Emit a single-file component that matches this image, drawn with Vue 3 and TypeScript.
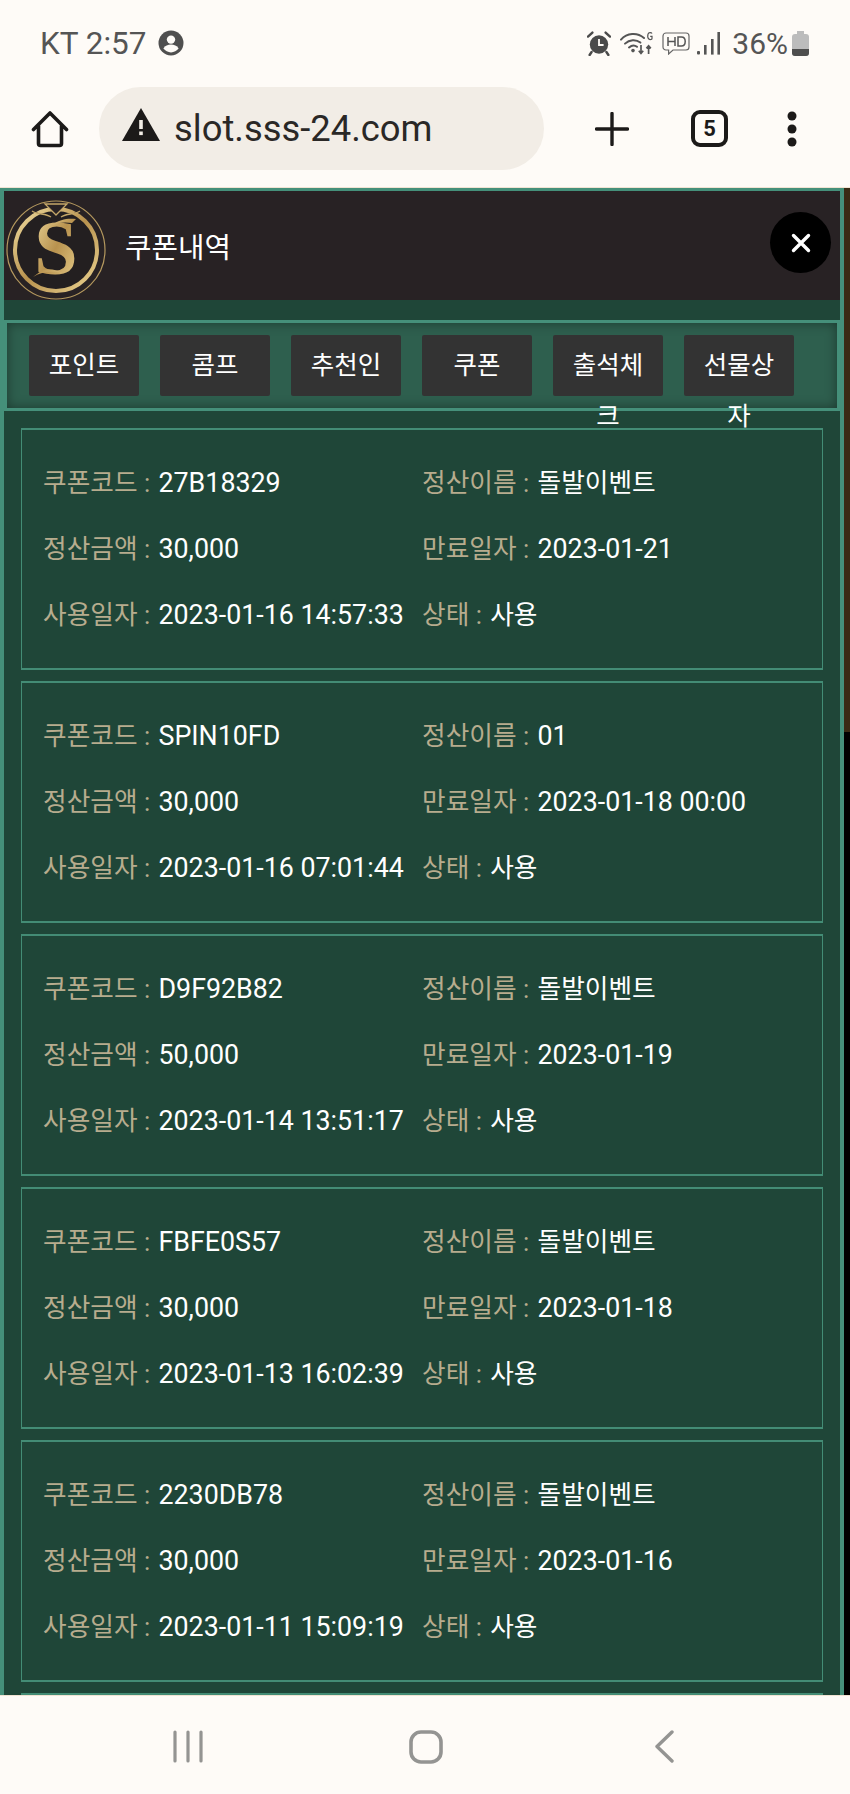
<template>
  <div class="screen">
    <div class="status-bar">
      <div class="status-left">
        <span class="status-text carrier">KT 2:57</span>
        <svg class="ic-user" viewBox="0 0 26 26" aria-hidden="true">
          <circle cx="13" cy="13" r="12.5" fill="#4f4f4f" />
          <circle cx="13" cy="9.6" r="4.2" fill="#fefbf7" />
          <path d="M5.4 18.6c1.6-3 4.6-4 7.6-4s6 1 7.6 4c-1.8 2.4-4.6 3.8-7.6 3.8s-5.8-1.4-7.6-3.8z" fill="#fefbf7" />
        </svg>
      </div>
      <div class="status-right">
        <svg class="ic-alarm" viewBox="0 0 24 25" aria-hidden="true">
          <circle cx="12" cy="13.5" r="9.2" fill="#4a4a4a" />
          <path d="M12 8v6h4.6" fill="none" stroke="#fefbf7" stroke-width="1.8" />
          <path d="M1 5.6 5.4 1.6M23 5.6 18.6 1.6M4.6 21l-2 3M19.4 21l2 3" stroke="#4a4a4a" stroke-width="2.4" stroke-linecap="round" />
        </svg>
        <svg class="ic-wifi" viewBox="0 0 33 24" aria-hidden="true">
          <g fill="none" stroke="#555" stroke-width="2" stroke-linecap="round">
            <path d="M1 8.6C7 2 17 1 24 7" />
            <path d="M5 12.6c4.400-4.200 11-4.600 15.400-1" />
            <path d="M9 16.400c2.600-2.200 5.800-2.400 8-.6" />
          </g>
          <circle cx="13" cy="19.600" r="1.800" fill="#555" />
          <path d="M21 14v8M18.800 19.800l2.200 2.600 2.200-2.600M28.600 23v-8M26.400 17.400l2.200-2.600 2.200 2.600" fill="none" stroke="#555" stroke-width="1.700" />
          <path d="M32 2.600c-.6-1.200-3.400-1.400-4 .6-.4 1.600-.2 4 .8 4.800 1.200 1 3.200.6 3.200-.6V5.400h-1.800" fill="none" stroke="#555" stroke-width="1.200" />
        </svg>
        <svg class="ic-hd" viewBox="0 0 28 23" aria-hidden="true">
          <path d="M4 1h20a3 3 0 0 1 3 3v11a3 3 0 0 1-3 3H11l-4.400 4v-4H4a3 3 0 0 1-3-3V4a3 3 0 0 1 3-3z" fill="none" stroke="#666" stroke-width="1.200" />
          <path d="M6 5v9M13 5v9M6 9.500h7M16 5v9h3.400c2.800 0 3.800-2 3.800-4.500S22.200 5 19.400 5H16z" fill="none" stroke="#555" stroke-width="1.500" />
        </svg>
        <svg class="ic-signal" viewBox="0 0 23 23" aria-hidden="true">
          <g fill="#555">
            <rect x="0" y="19" width="3" height="3.600" rx="1" />
            <rect x="7" y="13" width="2.600" height="9.600" />
            <rect x="14" y="7" width="2.600" height="15.600" />
            <rect x="20.400" y="0" width="2.600" height="22.600" />
          </g>
        </svg>
        <span class="status-text battery-text">36%</span>
        <div class="battery"><div class="battery-level"></div></div>
      </div>
    </div>

    <div class="toolbar">
      <svg class="ic-home" viewBox="0 0 38 38" aria-hidden="true">
        <path d="M2.500 19.500 19 3l16.500 16.500M7.500 16v17.500a2 2 0 0 0 2 2h19a2 2 0 0 0 2-2V16" fill="none" stroke="#1c1a19" stroke-width="3.600" stroke-linecap="round" stroke-linejoin="round" />
      </svg>
      <div class="address">
        <svg class="ic-warn" viewBox="0 0 38 33" aria-hidden="true">
          <path d="M19 0 38 33H0z" fill="#1c1a19" />
          <rect x="17.200" y="12" width="3.600" height="9" fill="#f2ede6" />
          <rect x="17.200" y="23.500" width="3.600" height="3.600" fill="#f2ede6" />
        </svg>
        <span class="url">slot.sss-24.com</span>
      </div>
      <svg class="ic-plus" viewBox="0 0 34 34" aria-hidden="true">
        <path d="M17 1.500v31M1.500 17h31" stroke="#1c1a19" stroke-width="3.400" stroke-linecap="round" />
      </svg>
      <div class="tab-count">5</div>
      <svg class="ic-dots" viewBox="0 0 10 36" aria-hidden="true">
        <circle cx="5" cy="5" r="4.500" fill="#1c1a19" />
        <circle cx="5" cy="18" r="4.500" fill="#1c1a19" />
        <circle cx="5" cy="31" r="4.500" fill="#1c1a19" />
      </svg>
    </div>

    <div class="viewport">
      <div class="panel">
        <div class="panel-head">
          <svg class="logo" viewBox="0 0 100 100" aria-hidden="true">
            <defs>
              <linearGradient id="gold" x1="0" y1="0" x2="1" y2="1">
                <stop offset="0" stop-color="#f0dca0" />
                <stop offset="0.5" stop-color="#b8924e" />
                <stop offset="1" stop-color="#ecd492" />
              </linearGradient>
            </defs>
            <circle cx="50" cy="50" r="49" fill="none" stroke="#b4985e" stroke-width="1.200" />
            <circle cx="50" cy="50" r="41" fill="#231f20" stroke="url(#gold)" stroke-width="4" />
            <path d="M50 15 39 4h22zM26 11c6 4 13 2 19 6M74 11c-6 4-13 2-19 6" fill="#282224" stroke="#c4a768" stroke-width="1.300" />
            <text class="logo-s" x="50" y="74" text-anchor="middle" fill="url(#gold)">S</text>
            <path d="M27 77c10-6 18-6 30-4-8-4-16-5-22-2zM70 19c-8-1-16 0-24 6 8-3 14-3 20-2z" fill="url(#gold)" />
          </svg>
          <span class="panel-title">쿠폰내역</span>
          <button type="button" class="close-btn" aria-label="닫기">
            <svg viewBox="0 0 20 20" aria-hidden="true">
              <path d="M2.500 2.500l15 15M17.500 2.500l-15 15" stroke="#fff" stroke-width="3.400" stroke-linecap="round" />
            </svg>
          </button>
        </div>

        <div class="tabs">
          <a v-for="tab in tabs" :key="tab" class="tab">{{ tab }}</a>
        </div>

        <div class="cards">
          <div v-for="c in coupons" :key="c.code" class="card">
            <div class="field"><span class="label">쿠폰코드 : </span><span class="value">{{ c.code }}</span></div>
            <div class="field"><span class="label">정산이름 : </span><span class="value" :class="{ ko: c.name !== '01' }">{{ c.name }}</span></div>
            <div class="field"><span class="label">정산금액 : </span><span class="value">{{ c.amount }}</span></div>
            <div class="field"><span class="label">만료일자 : </span><span class="value">{{ c.expires }}</span></div>
            <div class="field"><span class="label">사용일자 : </span><span class="value">{{ c.used }}</span></div>
            <div class="field"><span class="label">상태 : </span><span class="value ko">사용</span></div>
          </div>
          <div class="card"></div>
        </div>
      </div>
      <div class="side">
        <div class="side-top"></div>
        <div class="side-bottom"></div>
      </div>
    </div>

    <div class="nav-bar">
      <svg class="ic-recent" viewBox="0 0 30 33" aria-hidden="true">
        <path d="M2 2v29M15 2v29M28 2v29" stroke="#949492" stroke-width="3.200" stroke-linecap="round" />
      </svg>
      <svg class="ic-square" viewBox="0 0 34 34" aria-hidden="true">
        <rect x="2" y="2" width="30" height="30" rx="10" fill="none" stroke="#949492" stroke-width="3.600" />
      </svg>
      <svg class="ic-back" viewBox="0 0 19 33" aria-hidden="true">
        <path d="M17 2 2 16.500 17 31" fill="none" stroke="#949492" stroke-width="3.400" stroke-linecap="round" stroke-linejoin="round" />
      </svg>
    </div>
  </div>
</template>

<script setup lang="ts">
type Coupon = {
  code: string;
  name: string;
  amount: string;
  expires: string;
  used: string;
};

const tabs = ['포인트', '콤프', '추천인', '쿠폰', '출석체크', '선물상자'];

const coupons: Coupon[] = [
  { code: '27B18329', name: '돌발이벤트', amount: '30,000', expires: '2023-01-21', used: '2023-01-16 14:57:33' },
  { code: 'SPIN10FD', name: '01', amount: '30,000', expires: '2023-01-18 00:00', used: '2023-01-16 07:01:44' },
  { code: 'D9F92B82', name: '돌발이벤트', amount: '50,000', expires: '2023-01-19', used: '2023-01-14 13:51:17' },
  { code: 'FBFE0S57', name: '돌발이벤트', amount: '30,000', expires: '2023-01-18', used: '2023-01-13 16:02:39' },
  { code: '2230DB78', name: '돌발이벤트', amount: '30,000', expires: '2023-01-16', used: '2023-01-11 15:09:19' },
];
</script>

<style scoped>
.screen {
  width: 850px;
  height: 1794px;
  display: flex;
  flex-direction: column;
  overflow: hidden;
  background: #fefbf7;
  font-family: Roboto, "Noto Sans CJK KR", sans-serif;
}

.status-bar {
  height: 87px;
  flex: none;
  display: flex;
  justify-content: space-between;
  align-items: center;
  padding: 0 41px 1px 40px;
  box-sizing: border-box;
}

.status-left,
.status-right {
  display: flex;
  align-items: center;
}

.status-text {
  font-size: 30px;
  color: #555;
}

.carrier {
  font-size: 31.5px;
}

.ic-user {
  width: 26px;
  height: 26px;
  margin-left: 11px;
}

.ic-alarm {
  width: 24px;
  height: 25px;
}

.ic-wifi {
  width: 33px;
  height: 24px;
  margin-left: 9px;
}

.ic-hd {
  width: 28px;
  height: 23px;
  margin-left: 9px;
}

.ic-signal {
  width: 23px;
  height: 23px;
  margin-left: 7px;
}

.battery-text {
  margin-left: 12px;
}

.battery {
  width: 17px;
  height: 22px;
  margin-left: 4px;
  margin-top: 3px;
  position: relative;
  border-radius: 3px;
  background: #bcbcbc;
  overflow: visible;
}

.battery::before {
  content: "";
  position: absolute;
  top: -3px;
  left: 5px;
  width: 7px;
  height: 3px;
  background: #bcbcbc;
}

.battery-level {
  position: absolute;
  left: 0;
  right: 0;
  bottom: 0;
  height: 7px;
  border-radius: 0 0 3px 3px;
  background: #4e4e4e;
}

.toolbar {
  height: 100px;
  flex: none;
  display: flex;
  align-items: flex-start;
  box-sizing: border-box;
}

.ic-home {
  width: 38px;
  height: 38px;
  margin: 23px 0 0 31px;
}

.address {
  width: 445px;
  height: 83px;
  margin-left: 30px;
  border-radius: 42px;
  background: #f2ede6;
  display: flex;
  align-items: center;
  padding-left: 23px;
  box-sizing: border-box;
}

.ic-warn {
  width: 38px;
  height: 33px;
  margin-top: -8px;
}

.url {
  margin-left: 14px;
  font-size: 36.4px;
  color: #2a2826;
}

.ic-plus {
  width: 34px;
  height: 34px;
  margin: 25px 0 0 51px;
}

.tab-count {
  width: 37px;
  height: 37px;
  margin: 23px 0 0 62px;
  border: 4px solid #1c1a19;
  border-radius: 9px;
  box-sizing: border-box;
  display: flex;
  align-items: center;
  justify-content: center;
  font-size: 22px;
  font-weight: 700;
  color: #1c1a19;
}

.ic-dots {
  width: 10px;
  height: 36px;
  margin: 24px 0 0 59px;
}

.viewport {
  flex: 1;
  min-height: 0;
  display: flex;
  border-top: 1px solid #f1e3d3;
}

.panel {
  width: 844px;
  flex: none;
  box-sizing: border-box;
  border: 4px solid #45907a;
  border-bottom: 0;
  border-top-width: 3px;
  background: #1f4638;
  overflow: hidden;
}

.panel-head {
  height: 109px;
  display: flex;
  align-items: center;
  background: #282224;
}

.logo {
  width: 100px;
  height: 100px;
  margin: 8px 0 0 2px;
  flex: none;
}

.logo-s {
  font-family: "Liberation Serif", serif;
  font-size: 78px;
  font-weight: 700;
}

.panel-title {
  margin-left: 19px;
  font-size: 28.8px;
  color: #fff;
}

.close-btn {
  width: 61px;
  height: 61px;
  margin: -6px 9px 0 auto;
  padding: 0;
  border: 0;
  border-radius: 50%;
  background: #000;
  display: flex;
  align-items: center;
  justify-content: center;
}

.close-btn svg {
  width: 20px;
  height: 20px;
}

.tabs {
  position: relative;
  z-index: 1;
  height: 91px;
  margin-top: 20px;
  box-sizing: border-box;
  border: 3px solid #45907a;
  background: #2e5f4e;
  box-shadow: inset 0 0 12px rgba(0, 0, 0, 0.4);
  display: flex;
  gap: 21px;
  padding: 12px 0 0 22px;
}

.tab {
  width: 110px;
  height: 61px;
  flex: none;
  box-sizing: border-box;
  padding: 5px 10px 0;
  background: #333;
  border-radius: 2px;
  text-align: center;
  font-size: 25.5px;
  line-height: 51px;
  color: #fff;
  word-break: break-all;
}

.cards {
  display: flex;
  flex-direction: column;
  gap: 11px;
  padding: 17px 17px 0;
}

.card {
  height: 242px;
  flex: none;
  box-sizing: border-box;
  border: solid #438c75;
  border-width: 2px 1.500px;
  padding: 17px 0 0 21px;
  display: grid;
  grid-template-columns: 379px 1fr;
  grid-auto-rows: 66px;
  align-items: center;
  white-space: nowrap;
}

.label {
  margin-right: 2px;
  font-size: 25.7px;
  color: #b7ac8e;
}

.value {
  font-size: 26.8px;
  color: #fff;
}

.value.ko {
  font-size: 25.7px;
}

.side {
  flex: 1;
  display: flex;
  flex-direction: column;
}

.side-top {
  height: 544px;
  background: #3a2a14;
}

.side-bottom {
  flex: 1;
  background: #000;
}

.nav-bar {
  height: 99px;
  flex: none;
  position: relative;
  border-top: 1px solid #f1e3d3;
  box-sizing: border-box;
}

.ic-recent,
.ic-square,
.ic-back {
  position: absolute;
  top: 34px;
}

.ic-recent {
  left: 173px;
  width: 30px;
  height: 33px;
}

.ic-square {
  left: 409px;
  width: 34px;
  height: 34px;
}

.ic-back {
  left: 655px;
  width: 19px;
  height: 33px;
}
</style>
